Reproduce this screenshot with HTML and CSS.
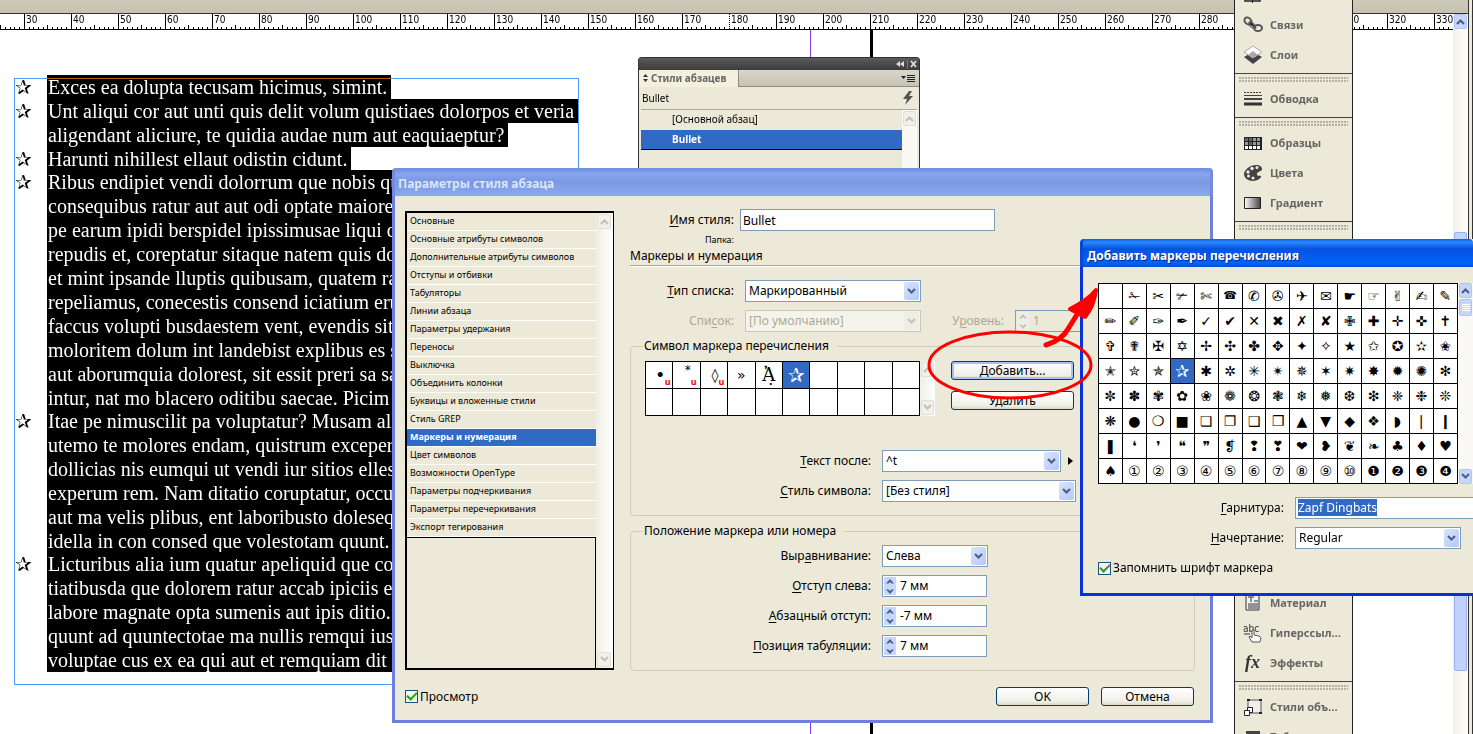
FILE: index.html
```html
<!DOCTYPE html>
<html lang="ru">
<head>
<meta charset="utf-8">
<title>Параметры стиля абзаца</title>
<link rel="stylesheet" href="styles.css">
</head>
<body>
<svg class="defs" aria-hidden="true">
  <defs>
    <symbol id="down" viewBox="0 0 9 7"><path d="M1 1l3.500 3.500L8 1" fill="none" stroke="currentColor" stroke-width="2.200"/></symbol>
    <symbol id="up" viewBox="0 0 9 7"><path d="M1 6l3.500-3.500L8 6" fill="none" stroke="currentColor" stroke-width="2.200"/></symbol>
    <symbol id="spin" viewBox="0 0 12 19"><path d="M2 6.500L6 2l4 4.500H7.500L6 5 4.500 6.500zM2 12.500L6 17l4-4.500H7.500L6 14l-1.500-1.500z" fill="currentColor"/></symbol>
    <linearGradient id="grad"><stop offset="0" stop-color="#fff"/><stop offset="1" stop-color="#444"/></linearGradient>
  </defs>
</svg>

<main class="workspace">
  <div class="topbar"></div>
  <div class="ruler">
    <svg class="ticks" aria-hidden="true">
      <defs><pattern id="mm" x="24" width="47" height="15" patternUnits="userSpaceOnUse">
        <path d="M5 13h1v2H5zM9 13h1v2H9zM14 13h1v2h-1zM19 13h1v2h-1zM23 11h1v4h-1zM28 13h1v2h-1zM33 13h1v2h-1zM37 13h1v2h-1zM42 13h1v2h-1z"/>
      </pattern></defs>
      <rect width="100%" height="15" fill="url(#mm)"/>
    </svg>
    <div class="marks"><span>30</span><span>40</span><span>50</span><span>60</span><span>70</span><span>80</span><span>90</span><span>100</span><span>110</span><span>120</span><span>130</span><span>140</span><span>150</span><span>160</span><span>170</span><span class="cursor">180</span><span>190</span><span>200</span><span>210</span><span>220</span><span>230</span><span>240</span><span>250</span><span>260</span><span>270</span><span>280</span><span></span><span></span><span>310</span><span>320</span><span>330</span></div>
  </div>
  <div class="guide margin-guide"></div>
  <div class="guide page-edge"></div>

  <section class="story">
    <div class="frame"></div>
    <div class="para"><i>✰</i><p><span>Exces ea dolupta tecusam hicimus, simint.</span></p></div>
    <div class="para"><i>✰</i><p><span>Unt aliqui cor aut unti quis delit volum quistiaes dolorpos et veria</span><span>aligendant aliciure, te quidia audae num aut eaquiaeptur?</span></p></div>
    <div class="para"><i>✰</i><p><span>Harunti nihillest ellaut odistin cidunt.</span></p></div>
    <div class="para"><i>✰</i><p class="long"><span>Ribus endipiet vendi dolorrum que nobis qu</span><span>consequibus ratur aut aut odi optate maiore</span><span>pe earum ipidi berspidel ipissimusae liqui d</span><span>repudis et, coreptatur sitaque natem quis do</span><span>et mint ipsande lluptis quibusam, quatem ra</span><span>repeliamus, conecestis consend iciatium eru</span><span>faccus volupti busdaestem vent, evendis siti</span><span>moloritem dolum int landebist explibus es s</span><span>aut aborumquia dolorest, sit essit preri sa sa</span><span>intur, nat mo blacero oditibu saecae. Picim v</span></p></div>
    <div class="para"><i>✰</i><p class="long"><span>Itae pe nimuscilit pa voluptatur? Musam ali</span><span>utemo te molores endam, quistrum exceper</span><span>dollicias nis eumqui ut vendi iur sitios ellest</span><span>experum rem. Nam ditatio coruptatur, occu</span><span>aut ma velis plibus, ent laboribusto dolesequ</span><span>idella in con consed que volestotam quunt.</span></p></div>
    <div class="para"><i>✰</i><p class="long"><span>Licturibus alia ium quatur apeliquid que cor</span><span>tiatibusda que dolorem ratur accab ipiciis eu</span><span>labore magnate opta sumenis aut ipis ditio.</span><span>quunt ad quuntectotae ma nullis remqui ius</span><span>voluptae cus ex ea qui aut et remquiam dit a</span></p></div>
  </section>

  <div class="vscroll">
    <button class="sbtn" aria-label="Вверх"><svg width="9" height="7"><use href="#up"/></svg></button>
    <div class="thumb"></div>
  </div>
  <div class="edge"></div>

  <section class="styles-panel">
    <div class="panel-cap">
      <svg width="21" height="9" viewBox="0 0 21 9" fill="#ddd"><path d="M4 1v6L0 4zM8 1v6L4 4z"/><path d="M11 0h1v9h-1z" fill="#777"/><path d="M15 1l5 6M20 1l-5 6" stroke="#ddd" stroke-width="1.800"/></svg>
    </div>
    <div class="panel-tabs">
      <button class="tab"><svg width="5" height="8" viewBox="0 0 5 8"><path d="M0 3l2.500-3L5 3zM0 5l2.500 3L5 5z" fill="#333"/></svg>Стили абзацев</button>
      <svg class="menu" width="14" height="9" viewBox="0 0 14 9"><path d="M0 2h5L2.500 5zM6 1h8v1H6zM6 3h8v1H6zM6 5h8v1H6zM6 7h8v1H6z" fill="#222"/></svg>
    </div>
    <div class="panel-name"><span>Bullet</span><svg width="10" height="14" viewBox="0 0 10 14"><path d="M6 0L0 8h4l-2 6 8-9H6l3-5z" fill="#555"/></svg></div>
    <div class="panel-list">
      <div class="rows"><div class="prow">[Основной абзац]</div><div class="prow on">Bullet</div></div>
      <div class="pscroll"><button class="sbtn off" aria-label="Вверх"><svg width="9" height="7"><use href="#up"/></svg></button></div>
    </div>
  </section>

  <aside class="dock">
    <div class="group first">
      <button class="item"><svg width="20" height="20" viewBox="0 0 20 20"><path d="M2 3h15v13H2z" fill="#fff" stroke="#222" stroke-width="1.500"/><path d="M9.500 3v15" stroke="#222"/></svg></button>
      <button class="item"><svg width="20" height="20" viewBox="0 0 20 20" fill="none" stroke="#555" stroke-width="2"><ellipse cx="5" cy="6" rx="3" ry="4" transform="rotate(-45 5 6)"/><path d="M7 8l6 5" stroke="#222"/><ellipse cx="9" cy="10" rx="2" ry="4" transform="rotate(-45 9 10)" stroke-width="1.300"/><ellipse cx="15" cy="13" rx="4" ry="3"/></svg>Связи</button>
      <button class="item"><svg width="20" height="20" viewBox="0 0 20 20"><path d="M1 12l9-5 9 5-9 7z" fill="#444"/><path d="M1 7l9-6 9 6-9 6z" fill="#fff" stroke="#aaa"/><path d="M5 10l5-4 5 4-5 3z" fill="#aaa"/></svg>Слои</button>
    </div>
    <div class="group">
      <button class="item"><svg width="20" height="20" viewBox="0 0 20 20"><path d="M1 3.500h18" stroke="#444" stroke-dasharray="2 1"/><path d="M1 6.500h18" stroke="#444"/><path d="M1 10h18" stroke="#444" stroke-width="2"/><path d="M1 15h18" stroke="#333" stroke-width="3"/></svg>Обводка</button>
    </div>
    <div class="group">
      <button class="item"><svg width="20" height="20" viewBox="0 0 20 20"><path d="M1 4h18v13H1z" fill="#222"/><path d="M10 5h3v3h-3zM14 5h3v3h-3zM2 9h3v3H2zM10 9h3v3h-3zM14 9h3v3h-3z" fill="#999"/><path d="M2 5h3v3H2zM6 5h3v3H6zM6 9h3v3H6z" fill="#666"/><path d="M2 13h3v3H2zM6 13h3v3H6zM10 13h3v3h-3zM14 13h3v3h-3z" fill="#fff"/></svg>Образцы</button>
      <button class="item"><svg width="20" height="20" viewBox="0 0 20 20"><path d="M19 6c0 3-5 2-5 5s3 1 4 2-3 5-8 5-9-3-9-7S7 2 13 2c4 0 6 2 6 4z" fill="#444"/><g fill="#eee"><circle cx="5" cy="9" r="1.700"/><circle cx="9" cy="5.500" r="1.700"/><circle cx="14" cy="4.500" r="1.500"/><circle cx="5.500" cy="13" r="1.500"/><circle cx="10" cy="15" r="1.500"/></g></svg>Цвета</button>
      <button class="item"><svg width="20" height="20" viewBox="0 0 20 20"><path d="M1.500 4.500h16v11h-16z" fill="url(#grad)" stroke="#222"/></svg>Градиент</button>
    </div>
    <div class="group lower">
      <button class="item"><svg width="20" height="20" viewBox="0 0 20 20"><path d="M3 2h13v15H3z" fill="#f2f2f2" stroke="#333"/><path d="M5 4h6M8 4v5M11 8h4M5 11h10M5 13h10M5 15h10" stroke="#333"/></svg>Материал</button>
      <button class="item"><svg width="20" height="20" viewBox="0 0 20 20"><text class="abc" x="0" y="9">abc</text><path d="M1 11h6" stroke="#333"/><path d="M9 19l-3-5 1-1 2 2V7h2v5l5 1 2 2-1 4z" fill="#fff" stroke="#555"/></svg>Гиперссыл…</button>
      <button class="item"><svg width="20" height="20" viewBox="0 0 20 20"><text class="fx" x="2" y="15">fx</text></svg>Эффекты</button>
    </div>
    <div class="group">
      <button class="item"><svg width="20" height="20" viewBox="0 0 20 20"><path d="M5 3h13v13H5z" fill="#eee" stroke="#555"/><path d="M4 3h3M16 3h3M16 16h3" stroke="#222" stroke-width="2"/><path d="M4.500 10.500h5v5h-5z" fill="#fff" stroke="#222"/><path d="M1.500 13.500h5v5h-5z" fill="#fff" stroke="#222"/></svg>Стили объ…</button>
      <button class="item"><svg width="20" height="20" viewBox="0 0 20 20"><path d="M3 4h14v14H3z" fill="#444"/></svg>Таблица</button>
    </div>
  </aside>

  <section class="dialog" role="dialog" aria-label="Параметры стиля абзаца">
    <h1 class="title">Параметры стиля абзаца</h1>
    <div class="dialog-body">
      <nav class="cats">
        <div class="cat-col">
          <button>Основные</button><button>Основные атрибуты символов</button><button>Дополнительные атрибуты символов</button><button>Отступы и отбивки</button><button>Табуляторы</button><button>Линии абзаца</button><button>Параметры удержания</button><button>Переносы</button><button>Выключка</button><button>Объединить колонки</button><button>Буквицы и вложенные стили</button><button>Стиль GREP</button><button class="on">Маркеры и нумерация</button><button>Цвет символов</button><button>Возможности OpenType</button><button>Параметры подчеркивания</button><button>Параметры перечеркивания</button><button>Экспорт тегирования</button>
          <div class="rest"></div>
        </div>
        <div class="cat-scroll"><button class="sbtn off" aria-label="Вверх"><svg width="9" height="7"><use href="#up"/></svg></button><button class="sbtn off" aria-label="Вниз"><svg width="9" height="7"><use href="#down"/></svg></button></div>
      </nav>

      <div class="settings">
        <div class="name-row"><label for="nm"><u>И</u>мя стиля:</label><input id="nm" class="field" value="Bullet"></div>
        <div class="folder">Папка:</div>
        <h2>Маркеры и нумерация</h2>
        <div class="type-grid">
          <label for="tp"><u>Т</u>ип списка:</label>
          <div class="select w176"><select id="tp"><option>Маркированный</option></select><span class="arr"><svg width="9" height="7"><use href="#down"/></svg></span></div>
          <label for="ls" class="dim">Спи<u>с</u>ок:</label>
          <div class="select w176 off"><select id="ls" disabled><option>[По умолчанию]</option></select><span class="arr"><svg width="9" height="7"><use href="#down"/></svg></span></div>
          <label for="lv" class="dim">У<u>р</u>овень:</label>
          <div class="spin off"><span><svg width="12" height="19"><use href="#spin"/></svg></span><input id="lv" value="1" disabled></div>
        </div>

        <fieldset class="symbols">
          <legend>Символ маркера перечисления</legend>
          <div class="sym-top">
            <table class="marks-table"><tr><td><b>•</b><em>u</em></td><td><sup>*</sup><em>u</em></td><td>◊<em>u</em></td><td>»</td><td class="serif">Ἀ̣</td><td class="sel">✰</td><td></td><td></td><td></td><td></td></tr><tr><td></td><td></td><td></td><td></td><td></td><td></td><td></td><td></td><td></td><td></td></tr></table>
            <div class="mini-scroll"><button class="sbtn off" aria-label="Вверх"><svg width="9" height="7"><use href="#up"/></svg></button><button class="sbtn off" aria-label="Вниз"><svg width="9" height="7"><use href="#down"/></svg></button></div>
            <div class="sym-btns"><button class="btn default">Добавить...</button><button class="btn">Удалить</button></div>
          </div>
          <div class="form">
            <label for="ta"><u>Т</u>екст после:</label>
            <div class="inline"><div class="select w179"><select id="ta"><option>^t</option></select><span class="arr"><svg width="9" height="7"><use href="#down"/></svg></span></div><svg width="5" height="8"><path d="M0 0l5 4-5 4z"/></svg></div>
            <label for="cs"><u>С</u>тиль символа:</label>
            <div class="select w194"><select id="cs"><option>[Без стиля]</option></select><span class="arr"><svg width="9" height="7"><use href="#down"/></svg></span></div>
          </div>
        </fieldset>

        <fieldset class="position">
          <legend>Положение маркера или номера</legend>
          <div class="form">
            <label for="al">Выр<u>а</u>внивание:</label>
            <div class="select w106"><select id="al"><option>Слева</option></select><span class="arr"><svg width="9" height="7"><use href="#down"/></svg></span></div>
            <label for="li"><u>О</u>тступ слева:</label>
            <div class="spin"><span><svg width="12" height="19"><use href="#spin"/></svg></span><input id="li" value="7 мм"></div>
            <label for="fi"><u>А</u>бзацный отступ:</label>
            <div class="spin"><span><svg width="12" height="19"><use href="#spin"/></svg></span><input id="fi" value="-7 мм"></div>
            <label for="tb"><u>П</u>озиция табуляции:</label>
            <div class="spin"><span><svg width="12" height="19"><use href="#spin"/></svg></span><input id="tb" value="7 мм"></div>
          </div>
        </fieldset>
      </div>
    </div>
    <footer class="foot"><label class="check"><input type="checkbox" checked>Просмотр</label><button class="btn small">OK</button><button class="btn small">Отмена</button></footer>
  </section>

  <section class="dialog active" role="dialog" aria-label="Добавить маркеры перечисления">
    <h1 class="title">Добавить маркеры перечисления</h1>
    <div class="glyph-area">
      <table class="glyphs">
        <tr><td></td><td>✁</td><td>✂</td><td>✃</td><td>✄</td><td class="tel">☎</td><td>✆</td><td>✇</td><td>✈</td><td>✉</td><td>☛</td><td>☞</td><td>✌</td><td>✍</td><td>✎</td></tr>
        <tr><td>✏</td><td>✐</td><td>✑</td><td>✒</td><td>✓</td><td>✔</td><td>✕</td><td>✖</td><td>✗</td><td>✘</td><td>✙</td><td>✚</td><td>✛</td><td>✜</td><td>✝</td></tr>
        <tr><td>✞</td><td>✟</td><td>✠</td><td>✡</td><td>✢</td><td>✣</td><td>✤</td><td>✥</td><td>✦</td><td>✧</td><td>★</td><td>✩</td><td>✪</td><td>✫</td><td>✬</td></tr>
        <tr><td>✭</td><td>✮</td><td>✯</td><td class="sel">✰</td><td>✱</td><td>✲</td><td>✳</td><td>✴</td><td>✵</td><td>✶</td><td>✷</td><td>✸</td><td>✹</td><td>✺</td><td>✻</td></tr>
        <tr><td>✼</td><td>✽</td><td>✾</td><td>✿</td><td>❀</td><td>❁</td><td>❂</td><td>❃</td><td>❄</td><td>❅</td><td>❆</td><td>❇</td><td>❈</td><td>❉</td><td>❊</td></tr>
        <tr><td>❋</td><td>●</td><td>❍</td><td>■</td><td>❏</td><td>❐</td><td>❑</td><td>❒</td><td>▲</td><td>▼</td><td>◆</td><td>❖</td><td>◗</td><td>❘</td><td>❙</td></tr>
        <tr><td>❚</td><td>❛</td><td>❜</td><td>❝</td><td>❞</td><td>❡</td><td>❢</td><td>❣</td><td>❤</td><td>❥</td><td>❦</td><td>❧</td><td>♣</td><td>♦</td><td>♥</td></tr>
        <tr><td>♠</td><td>①</td><td>②</td><td>③</td><td>④</td><td>⑤</td><td>⑥</td><td>⑦</td><td>⑧</td><td>⑨</td><td>⑩</td><td>❶</td><td>❷</td><td>❸</td><td>❹</td></tr>
      </table>
      <div class="glyph-scroll"><button class="sbtn" aria-label="Вверх"><svg width="9" height="7"><use href="#up"/></svg></button><div class="grip"><svg width="8" height="8"><path d="M0 0h8v1H0zM0 2h8v1H0zM0 4h8v1H0zM0 6h8v1H0z" fill="#fff"/></svg></div><button class="sbtn last" aria-label="Вниз"><svg width="9" height="7"><use href="#down"/></svg></button></div>
    </div>
    <div class="form font-form">
      <label id="ffl"><u>Г</u>арнитура:</label>
      <div class="field combo" role="combobox" tabindex="0" aria-expanded="false" aria-labelledby="ffl"><mark>Zapf Dingbats</mark></div>
      <label for="fs"><u>Н</u>ачертание:</label>
      <div class="select w166"><select id="fs"><option>Regular</option></select><span class="arr"><svg width="9" height="7"><use href="#down"/></svg></span></div>
    </div>
    <label class="check remember"><input type="checkbox" checked>Запомнить шрифт маркера</label>
  </section>

  <svg class="annotation" width="180" height="120" viewBox="925 284 180 120" aria-hidden="true">
    <ellipse cx="1010" cy="365" rx="81" ry="33" fill="none" stroke="#f00" stroke-width="3"/>
    <path d="M1046 345Q1062 340 1068 329L1078 313" fill="none" stroke="#f00" stroke-width="5" stroke-linecap="round"/>
    <path d="M1096 290Q1088 300 1070 309L1085 317Q1094 306 1096 290z" fill="#f00" stroke="#f00" stroke-width="4" stroke-linejoin="round"/>
  </svg>
</main>
</body>
</html>
```

FILE: styles.css
```css
* { box-sizing: border-box; }
:root {
  --face: #ece9d8;
  --blue: #316ac5;
  --line: #7f9db9;
  --groove: #cfccbb;
}
body {
  margin: 0;
  background: #fff;
  color: #000;
  font: 12px/16px "Noto Sans", "DejaVu Sans", sans-serif;
}
button, input, select { font: inherit; color: inherit; margin: 0; }
button { padding: 0; border: 0; background: none; }
svg { display: block; flex: none; }
u { text-underline-offset: 2px; }
.defs { position: absolute; width: 0; height: 0; }
.workspace { position: relative; height: 100vh; overflow: hidden; background: #fff; }

.topbar { height: 14px; background: linear-gradient(#cdcaba, #c5c2b2); border-bottom: 1px solid #333; }
.ruler { display: grid; height: 16px; margin-right: 20px; overflow: hidden; border-bottom: 1px solid #000; }
.ticks, .marks { grid-area: 1 / 1; width: 100%; height: 15px; }
.marks { display: flex; padding-left: 24px; }
.marks span { flex: 0 0 47px; padding-left: 1px; border-left: 1px solid #000; font: 10px/12px "DejaVu Sans Condensed", "DejaVu Sans", sans-serif; }
.marks span:last-child { flex-basis: 19px; }
.marks .cursor { border-left-style: dotted; }
.guide { position: absolute; top: 30px; bottom: 0; }
.margin-guide { left: 810px; width: 1px; background: #8d3cf0; }
.page-edge { left: 870px; width: 3px; background: #000; }

.story { position: absolute; left: 14px; top: 75px; width: 565px; padding-bottom: 13px; font: 20px/24px "Liberation Serif", serif; }
.frame { position: absolute; inset: 3px 0 0; border: 1px solid #b56500; mix-blend-mode: difference; }
.para { display: grid; grid-template-columns: 33px 1fr; }
.para:nth-child(n+5) { margin-top: -1px; }
.para i { padding-left: 1px; font: 20px/24px "DejaVu Sans", sans-serif; }
.para p { margin: 0; }
.para span { display: block; width: fit-content; padding: 0 4px 0 1px; background: #000; color: #fff; white-space: nowrap; }
.para .long span { width: 348px; }

.vscroll { position: absolute; left: 1453px; top: 14px; bottom: 0; width: 15px; padding: 0 1px; background: linear-gradient(90deg, #f2f0ea, #fefefb); }
.thumb { height: 439px; margin-top: 203px; border: 1px solid #98b0ec; border-radius: 2px; background: #c1d2fc; }
.edge { position: absolute; left: 1468px; top: 0; bottom: 0; width: 5px; border: solid #333; border-width: 0 1px; background: var(--face); }
.sbtn { display: grid; place-items: center; width: 13px; height: 15px; border: 1px solid #b0c4f4; border-radius: 2px; background: #c6d6fd; color: #4d6185; }
.sbtn.off { border-color: #e0dfd6; background: #f1f0e9; color: #c3c2b8; }

.styles-panel { position: absolute; left: 638px; top: 57px; width: 282px; height: 130px; border: 1px solid #333; border-radius: 3px 3px 0 0; background: var(--face); }
.panel-cap { display: flex; justify-content: flex-end; align-items: center; height: 12px; padding-right: 2px; background: linear-gradient(#5a5a5a, #3c3c3c); }
.panel-tabs { display: flex; justify-content: space-between; align-items: center; height: 17px; padding-right: 4px; border-bottom: 1px solid #8d8b82; background: linear-gradient(#dad7ca, #c6c3b5); }
.tab { display: flex; align-items: center; gap: 3px; width: 100px; height: 17px; padding-left: 4px; border-right: 1px solid #8d8b82; background: #f3f0df; color: #666; font-size: 10px; font-weight: 700; }
.panel-name { display: flex; justify-content: space-between; align-items: center; height: 23px; margin: 0 2px; padding: 0 4px 0 1px; border-bottom: 1px solid #aaa89c; font-size: 10px; }
.panel-list { display: flex; padding: 0 2px; }
.rows { flex: 1; font-size: 10px; }
.prow { height: 20px; padding-left: 31px; line-height: 19px; }
.prow.on { border-bottom: 1px solid #000; background: var(--blue); color: #fff; font-weight: 700; }
.pscroll { width: 15px; height: 76px; padding: 1px; background: #faf9f5; }

.dock { position: absolute; left: 1234px; top: 0; bottom: 0; width: 119px; overflow: hidden; border: solid #222; border-width: 0 1px; background: var(--face); }
.group { display: flex; flex-direction: column; border-top: 1px solid #444; padding-bottom: 3px; }
.group::before { content: ""; height: 5px; margin: 3px 4px 2px; background: radial-gradient(circle at 1px 1px, #b5b2a5 1px, transparent 1px) 0 0 / 3px 3px; }
.group.first { margin-top: -20px; border: 0; }
.group.first::before { display: none; }
.group.lower { height: 460px; }
.group.lower .item:first-of-type { margin-top: auto; }
.item { display: flex; align-items: center; gap: 7px; height: 30px; padding-left: 8px; color: #666; font-size: 11px; font-weight: 700; white-space: nowrap; }
.abc { font: 10px "DejaVu Sans Condensed", sans-serif; fill: #333; }
.fx { font: italic bold 18px "Liberation Serif", serif; fill: #333; }

.dialog { position: absolute; left: 392px; top: 168px; width: 821px; padding: 0 15px 14px 10px; border: 3px solid #6f7fdc; border-top: 0; border-radius: 7px 7px 0 0; background: var(--face); }
.title { margin: 0 -15px 0 -10px; height: 28px; padding-left: 3px; border-radius: 4px 4px 0 0; background: linear-gradient(#6f8ae0, #86a5ec 20%, #7b98e2 50%, #8caaf0); box-shadow: -3px 0 #7489df, 3px 0 #7489df; color: #dbe4fa; font-size: 12px; font-weight: 700; line-height: 31px; }
.dialog-body { display: grid; grid-template-columns: 209px 1fr; gap: 16px; padding-top: 13px; }
.cats { display: flex; height: 459px; margin-top: 2px; border: 1px solid #000; border-width: 2px 1px 2px 2px; }
.cat-col { display: flex; flex-direction: column; flex: 1; font-size: 9px; }
.cat-col button { height: 18px; padding: 0 0 2px 3px; border-bottom: 1px solid #fff; text-align: left; line-height: 15px; }
.cat-col .on { background: var(--blue); color: #fff; font-weight: 700; }
.rest { flex: 1; border: solid #000; border-width: 1px 1px 0 0; }
.cat-scroll, .mini-scroll { display: flex; flex-direction: column; justify-content: space-between; width: 17px; padding: 1px; background: linear-gradient(90deg, #f0efe6, #fff); }
.cat-scroll .sbtn { width: 14px; }

.settings { display: flex; flex-direction: column; }
.name-row { display: grid; grid-template-columns: 104px 255px; gap: 6px; align-items: center; text-align: right; }
.field { height: 22px; padding: 0 2px; border: 1px solid var(--line); background: #fff; line-height: 20px; }
.folder { width: 104px; height: 16px; text-align: right; font-size: 9px; line-height: 18px; }
h2 { margin: 0; height: 19px; border-bottom: 1px solid #aca899; box-shadow: 0 1px #fff; font-size: 12px; font-weight: 400; line-height: 17px; }
.type-grid { display: grid; grid-template-columns: 104px 176px 72px 80px; grid-auto-rows: 22px; gap: 8px 11px; align-items: center; padding-top: 14px; text-align: right; }
.type-grid label:nth-of-type(2) { grid-column: 1; }
.dim { color: #aca899; }
.select { display: grid; height: 22px; border: 1px solid var(--line); background: #fff; }
.select select { grid-area: 1 / 1; width: 100%; min-width: 0; padding: 0 3px; border: 0; background: none; appearance: none; }
.arr { grid-area: 1 / 1; justify-self: end; display: grid; place-items: center; width: 15px; margin: 1px; border-radius: 2px; background: linear-gradient(135deg, #d9e4ff, #b3c8f6); color: #4d6185; pointer-events: none; }
.w106 { width: 106px; }
.w166 { width: 166px; }
.w176 { width: 176px; }
.w179 { width: 179px; }
.w194 { width: 194px; }
.select.off { border-color: #c9c7ba; background: #f5f4ea; }
.off select, .off input { color: #aca899; opacity: 1; }
.spin { display: flex; width: 105px; height: 22px; border: 1px solid var(--line); background: #fff; }
.spin span { width: 12px; margin: 1px; background: #c6d6fd; color: #4d6185; }
.spin input { flex: 1; min-width: 0; padding: 0 3px; border: 0; background: none; }
.spin.off { background: var(--face); }
.off .arr, .spin.off span { background: #efeee5; color: #c3c2b8; }

fieldset { min-width: 0; margin: 0; padding: 0 0 0 14px; border: 1px solid var(--groove); border-radius: 4px; }
legend { height: 16px; margin-left: -2px; padding: 0 8px 0 1px; line-height: 16px; }
.symbols { height: 178px; margin-top: 6px; padding-top: 7px; }
.position { height: 148px; margin-top: 7px; padding-top: 6px; }
.sym-top { display: flex; height: 55px; }
.marks-table, .glyphs { border-collapse: collapse; table-layout: fixed; background: #fff; font-family: "DejaVu Sans", sans-serif; text-align: center; }
.marks-table { width: 275px; height: 55px; }
td { padding: 0; border: 1px solid #000; white-space: nowrap; }
.marks-table td { height: 27px; font-size: 14px; line-height: 20px; }
.marks-table em { margin-right: -8px; color: #f00; font: bold 9px/9px "Noto Sans", sans-serif; vertical-align: -5px; }
.marks-table sup { font-size: 12px; line-height: 8px; }
.marks-table .serif { font: 18px/20px "DejaVu Serif", serif; }
td.sel { background: var(--blue); color: #fff; }
.marks-table .sel { font-size: 20px; }
.mini-scroll { width: 15px; height: 55px; }
.sym-btns { display: flex; flex-direction: column; gap: 11px; width: 123px; margin-left: 16px; }
.btn { height: 19px; border: 1px solid #003c74; border-radius: 3px; background: linear-gradient(#fff, #efeee7 80%, #dbd8cc); line-height: 17px; }
.btn.default { box-shadow: inset 0 0 0 2px #a9c1f2; }
.form { display: grid; grid-template-columns: 226px auto; grid-auto-rows: 22px; justify-content: start; align-items: center; gap: 8px 11px; text-align: right; }
.symbols .form { margin-top: 34px; }
.inline { display: flex; align-items: center; gap: 7px; }

.foot { display: flex; align-items: center; gap: 12px; margin-top: 16px; padding-right: 1px; }
.check { display: flex; align-items: center; gap: 2px; margin-right: auto; }
.check input { display: grid; place-items: center; width: 13px; height: 13px; border: 1px solid #1c5180; background: #f5f5ef; appearance: none; }
.check input:checked::before { content: ""; width: 8px; height: 4px; margin-top: -3px; border: solid #21a121; border-width: 0 0 2px 2px; rotate: -45deg; }
.small { width: 93px; }

.active { left: 1080px; top: 239px; right: 0; width: auto; height: 357px; padding: 0 0 0 15px; border-color: #0831d9; border-right: 0; border-radius: 7px 0 0; }
.active .title { margin: 0 0 0 -15px; padding-left: 4px; background: linear-gradient(#0a5fe8, #2a86ff 12%, #0553dd 35%, #0262fd 85%, #0450d0); box-shadow: -3px 0 #0348d8; color: #fff; line-height: 33px; text-shadow: 1px 1px #0a2a80; }
.glyph-area { display: flex; padding-top: 16px; }
.glyphs { width: 360px; flex: none; }
.glyphs td { height: 25px; font-size: 14px; line-height: 20px; }
.glyphs .sel { font-size: 17px; }
.glyphs .tel { font-size: 11px; }
.glyph-scroll { display: flex; flex-direction: column; flex: 1; gap: 1px; padding-left: 1px; background: #faf9f5; }
.grip { display: grid; place-items: center; width: 13px; height: 17px; border: 1px solid #b0c4f4; border-radius: 2px; background: #c6d6fd; }
.last { margin-top: auto; }
.font-form { grid-template-columns: 186px 1fr; justify-content: stretch; padding-top: 13px; }
.combo { border-right: 0; text-align: left; }
mark { background: var(--blue); color: #fff; }
.remember { margin-top: 11px; }
.annotation { position: absolute; left: 925px; top: 284px; pointer-events: none; }
```
